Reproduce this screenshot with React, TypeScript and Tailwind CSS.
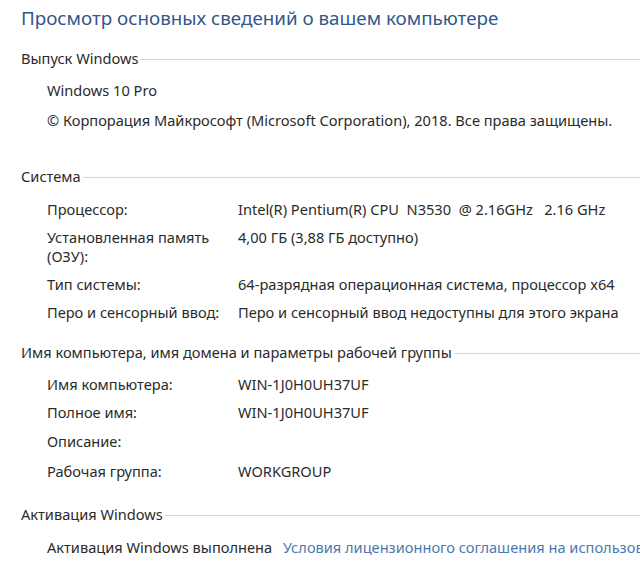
import React from "react";

const font = { fontFamily: '"Noto Sans", "Open Sans", sans-serif' };

function Heading({ text, mt }: { text: string; mt: string }) {
  return (
    <div className={`flex items-center h-[28px] ${mt}`}>
      <span className="text-[14.6px] text-[#2b2b2b] whitespace-nowrap pr-[2px]">{text}</span>
      <div className="flex-1 h-px bg-[#d4d4d4]" />
    </div>
  );
}

function Row({ label, value, mt, tall }: { label: React.ReactNode; value?: string; mt: string; tall?: boolean }) {
  return (
    <div className={`flex pl-[26px] text-[14.6px] text-[#2b2b2b] ${mt} ${tall ? "leading-[19px]" : "h-[28px] leading-[28px]"}`}>
      <div className="w-[191px] shrink-0 whitespace-nowrap">{label}</div>
      <div className="whitespace-pre">{value}</div>
    </div>
  );
}

export default function App() {
  return (
    <div className="w-[640px] h-[567px] bg-white overflow-hidden pl-[21px]" style={font}>
      <div className="h-[36px] leading-[36px] text-[18.8px] text-[#33578a] whitespace-nowrap">
        Просмотр основных сведений о вашем компьютере
      </div>
      <Heading text="Выпуск Windows" mt="mt-[9px]" />
      <div className="pl-[26px] h-[28px] leading-[28px] text-[14.6px] text-[#2b2b2b] mt-[3px]">Windows 10 Pro</div>
      <div className="pl-[26px] h-[28px] leading-[28px] text-[14.6px] text-[#2b2b2b] mt-[2px] whitespace-nowrap">
        © Корпорация Майкрософт (Microsoft Corporation), 2018. Все права защищены.
      </div>
      <Heading text="Система" mt="mt-[29px]" />
      <Row label="Процессор:" value="Intel(R) Pentium(R) CPU  N3530  @ 2.16GHz   2.16 GHz" mt="mt-[4px]" />
      <Row
        tall
        label={
          <>
            Установленная память
            <br />
            (ОЗУ):
          </>
        }
        value="4,00 ГБ (3,88 ГБ доступно)"
        mt="mt-[5px]"
      />
      <Row label="Тип системы:" value="64-разрядная операционная система, процессор x64" mt="mt-[4px]" />
      <Row label="Перо и сенсорный ввод:" value="Перо и сенсорный ввод недоступны для этого экрана" mt="mt-[0px]" />
      <Heading text="Имя компьютера, имя домена и параметры рабочей группы" mt="mt-[13px]" />
      <Row label="Имя компьютера:" value="WIN-1J0H0UH37UF" mt="mt-[3px]" />
      <Row label="Полное имя:" value="WIN-1J0H0UH37UF" mt="mt-[0px]" />
      <Row label="Описание:" value="" mt="mt-[1px]" />
      <Row label="Рабочая группа:" value="WORKGROUP" mt="mt-[2px]" />
      <Heading text="Активация Windows" mt="mt-[16px]" />
      <div className="flex pl-[26px] h-[28px] leading-[28px] text-[14.6px] mt-[4px] whitespace-nowrap">
        <span className="text-[#2b2b2b] w-[236px] shrink-0">Активация Windows выполнена</span>
        <span className="text-[#4b79b0]">Условия лицензионного соглашения на использование программного обеспечения корпорации Майкрософт</span>
      </div>
    </div>
  );
}
